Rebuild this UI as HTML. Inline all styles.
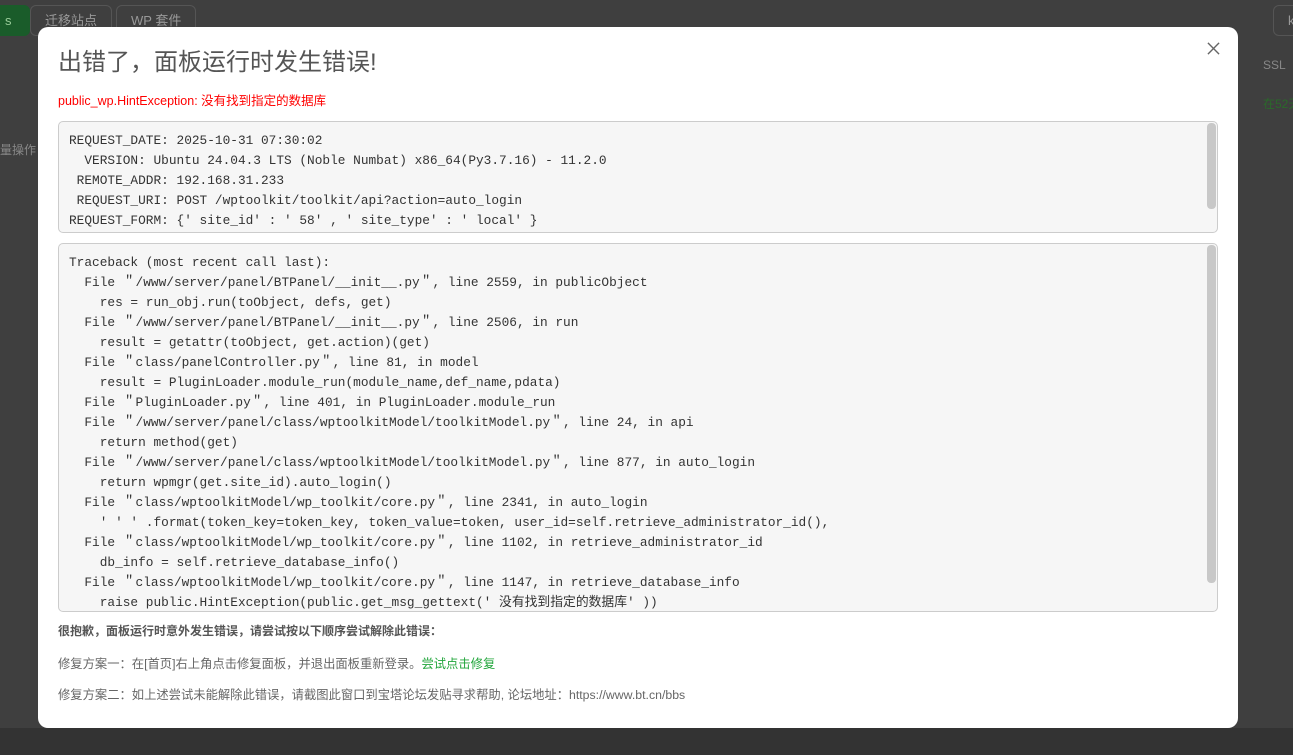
<!DOCTYPE html>
<html><head><meta charset="utf-8"><style>
body{margin:0;width:1293px;height:755px;overflow:hidden;background:#3f3f3f;font-family:"Liberation Sans","Noto Sans CJK SC",sans-serif;position:relative}
.bg{position:absolute;color:#888;font-size:12px;white-space:nowrap}
.btn{position:absolute;top:5px;height:29px;border:1px solid #555;border-radius:6px;color:#999;font-size:13px;line-height:29px;padding:0 14px}
.modal{position:absolute;left:38px;top:27px;width:1200px;height:701px;background:#fff;border-radius:10px}
h1{position:absolute;left:20px;top:15px;margin:0;font-weight:normal;font-size:24px;color:#555}
.err{position:absolute;left:20px;top:63px;color:#f00;font-size:12.5px}
.box{position:absolute;left:20px;width:1158px;background:#f6f6f6;border:1px solid #ccc;border-radius:5px;overflow:hidden}
pre{margin:0;padding:9px 10px;font-family:"Liberation Mono","Noto Sans CJK SC",monospace;font-size:12.8px;line-height:20px;color:#333}
.sb{position:absolute;right:1px;top:1px;width:9px;background:#c8c8c8;border-radius:4px}
.p{position:absolute;left:20px;font-size:12.3px;color:#666;white-space:nowrap}
.close{position:absolute;right:18px;top:15px}
</style></head><body>
<div class="btn" style="left:-10px;background:#1a5c2a;border-color:#1a5c2a;color:#9c9;width:10px">s</div>
<div class="btn" style="left:30px">迁移站点</div>
<div class="btn" style="left:116px">WP 套件</div>
<div class="btn" style="left:1273px;width:20px">k</div>
<div class="bg" style="left:1263px;top:58px">SSL</div>
<div class="bg" style="left:1263px;top:95px;color:#2a6a2a">在52天</div>
<div class="bg" style="left:0;top:141px">量操作</div>
<div style="position:absolute;left:0;top:728px;width:1293px;height:27px;background:#333"></div>
<div class="modal">
<h1>出错了，面板运行时发生错误!</h1>
<svg class="close" width="13" height="13" viewBox="0 0 14 14"><path d="M1 1L13 13M13 1L1 13" stroke="#666" stroke-width="1.5"/></svg>
<div class="err">public_wp.HintException: 没有找到指定的数据库</div>
<div class="box" style="top:94px;height:110px"><div class="sb" style="height:86px"></div><pre>REQUEST_DATE: 2025-10-31 07:30:02
  VERSION: Ubuntu 24.04.3 LTS (Noble Numbat) x86_64(Py3.7.16) - 11.2.0
 REMOTE_ADDR: 192.168.31.233
 REQUEST_URI: POST /wptoolkit/toolkit/api?action=auto_login
REQUEST_FORM: {' site_id' : ' 58' , ' site_type' : ' local' }</pre></div>
<div class="box" style="top:216px;height:367px"><div class="sb" style="height:338px"></div><pre>Traceback (most recent call last):
  File ＂/www/server/panel/BTPanel/__init__.py＂, line 2559, in publicObject
    res = run_obj.run(toObject, defs, get)
  File ＂/www/server/panel/BTPanel/__init__.py＂, line 2506, in run
    result = getattr(toObject, get.action)(get)
  File ＂class/panelController.py＂, line 81, in model
    result = PluginLoader.module_run(module_name,def_name,pdata)
  File ＂PluginLoader.py＂, line 401, in PluginLoader.module_run
  File ＂/www/server/panel/class/wptoolkitModel/toolkitModel.py＂, line 24, in api
    return method(get)
  File ＂/www/server/panel/class/wptoolkitModel/toolkitModel.py＂, line 877, in auto_login
    return wpmgr(get.site_id).auto_login()
  File ＂class/wptoolkitModel/wp_toolkit/core.py＂, line 2341, in auto_login
    ' ' ' .format(token_key=token_key, token_value=token, user_id=self.retrieve_administrator_id(),
  File ＂class/wptoolkitModel/wp_toolkit/core.py＂, line 1102, in retrieve_administrator_id
    db_info = self.retrieve_database_info()
  File ＂class/wptoolkitModel/wp_toolkit/core.py＂, line 1147, in retrieve_database_info
    raise public.HintException(public.get_msg_gettext(' 没有找到指定的数据库' ))</pre></div>
<div class="p" style="top:595px;font-weight:bold;color:#555;font-size:12px">很抱歉，面板运行时意外发生错误，请尝试按以下顺序尝试解除此错误：</div>
<div class="p" style="top:627px">修复方案一：在[首页]右上角点击修复面板，并退出面板重新登录。<span style="color:#20a53a">尝试点击修复</span></div>
<div class="p" style="top:658px">修复方案二：如上述尝试未能解除此错误，请截图此窗口到宝塔论坛发贴寻求帮助, 论坛地址：https://www.bt.cn/bbs</div>
</div>
</body></html>
